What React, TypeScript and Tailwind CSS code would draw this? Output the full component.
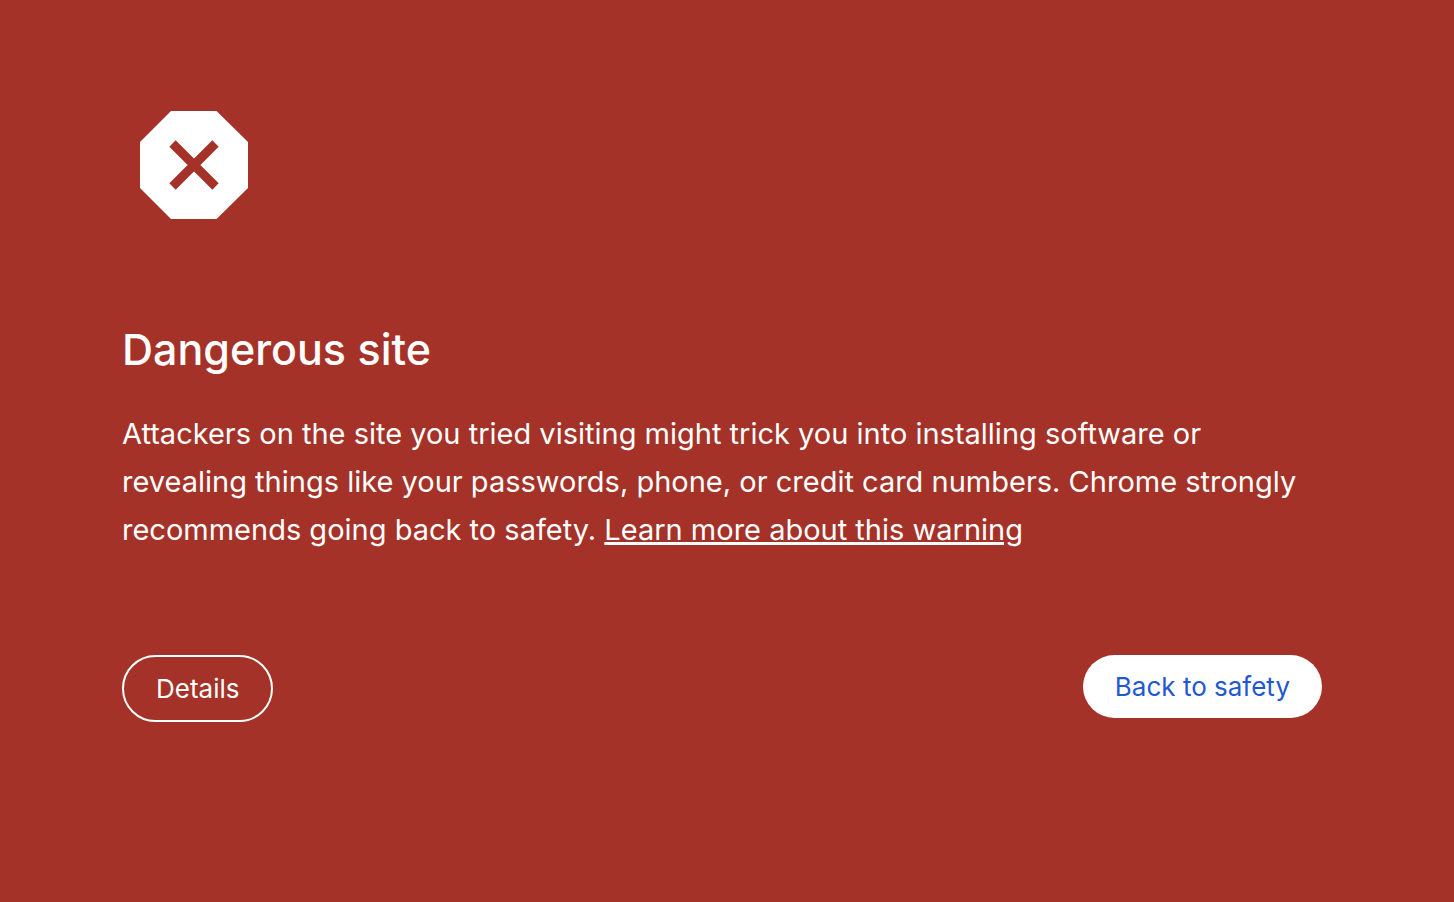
function StopIcon() {
  return (
    <svg viewBox="0 0 108 108" className="size-27 text-white" role="img" aria-label="Warning">
      <path fill="currentColor" d="M31 0H76.5L108 31V77L76.5 108H31L0 77V31Z" />
      <path stroke="#a53228" strokeWidth="9" d="M32.5 32.5L75.5 75.5M75.5 32.5L32.5 75.5" />
    </svg>
  );
}

export default function App() {
  return (
    <div className="min-h-screen bg-[#a53228] pt-[111px] pr-8 pb-16 pl-[22px] font-[Inter,sans-serif] text-white">
      <main className="mx-auto max-w-300">
        <div className="px-[18px]">
          <StopIcon />
        </div>

        <h1 className="mt-25 text-[43px] leading-15 font-medium">Dangerous site</h1>

        <p className="mt-[31px] text-[29px] leading-12">
          Attackers on the site you tried visiting might trick you into installing software or
          revealing things like your passwords, phone, or credit card numbers. Chrome strongly
          recommends going back to safety.{' '}
          <a href="#learn-more" className="underline decoration-3">
            Learn more about this warning
          </a>
        </p>

        <div className="mt-[101px] flex items-start justify-between">
          <button type="button" className="rounded-full border-2 border-white px-8 py-4 text-[26px] leading-[31px]">
            Details
          </button>
          <button type="button" className="rounded-full bg-white px-8 py-4 text-[26px] leading-[31px] text-[#1f59cf]">
            Back to safety
          </button>
        </div>
      </main>
    </div>
  );
}
